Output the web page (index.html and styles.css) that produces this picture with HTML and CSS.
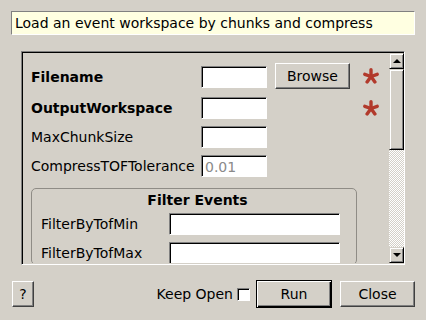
FILE: index.html
```html
<!DOCTYPE html>
<html lang="en">
<head>
  <meta charset="UTF-8" />
  <title>LoadEventAndCompress</title>
  <link rel="stylesheet" href="styles.css">
</head>
<body>
  <div class="dialog">
    <div class="summary">Load an event workspace by chunks and compress</div>

    <div class="scroll-frame">
      <div class="viewport">
        <div class="props">
          <label class="name bold">Filename</label>
          <input class="field" type="text">
          <button class="btn browse">Browse</button>
          <svg class="star" width="16" height="16" viewBox="0 0 16 16"><g stroke="#b23a2c" stroke-width="3.4" stroke-linecap="round"><line x1="8" y1="8.5" x2="8" y2="1.8"/><line x1="8" y1="8.5" x2="14.2" y2="6.3"/><line x1="8" y1="8.5" x2="11.9" y2="13.9"/><line x1="8" y1="8.5" x2="4.1" y2="13.9"/><line x1="8" y1="8.5" x2="1.8" y2="6.3"/></g></svg>

          <label class="name bold">OutputWorkspace</label>
          <input class="field" type="text">
          <span></span>
          <svg class="star" width="16" height="16" viewBox="0 0 16 16"><g stroke="#b23a2c" stroke-width="3.4" stroke-linecap="round"><line x1="8" y1="8.5" x2="8" y2="1.8"/><line x1="8" y1="8.5" x2="14.2" y2="6.3"/><line x1="8" y1="8.5" x2="11.9" y2="13.9"/><line x1="8" y1="8.5" x2="4.1" y2="13.9"/><line x1="8" y1="8.5" x2="1.8" y2="6.3"/></g></svg>

          <label class="name">MaxChunkSize</label>
          <input class="field" type="text">
          <span></span>
          <span></span>

          <label class="name">CompressTOFTolerance</label>
          <input class="field" type="text" placeholder="0.01">
          <span></span>
          <span></span>
        </div>

        <div class="group">
          <div class="group-title">Filter Events</div>
          <div class="group-rows">
            <label class="name">FilterByTofMin</label>
            <input class="field wide" type="text">
            <label class="name">FilterByTofMax</label>
            <input class="field wide" type="text">
          </div>
        </div>
      </div>

      <div class="scrollbar">
        <div class="arrow up"><span class="tri-up"></span></div>
        <div class="handle"></div>
        <div class="track"></div>
        <div class="arrow down"><span class="tri-down"></span></div>
      </div>
    </div>

    <div class="actions">
      <button class="btn help">?</button>
      <div class="spacer"></div>
      <label class="keep">Keep Open <span class="check"></span></label>
      <button class="btn run">Run</button>
      <button class="btn close">Close</button>
    </div>
  </div>
</body>
</html>
```

FILE: styles.css
```css
html, body {
  margin: 0;
  padding: 0;
  background: #d4d0c8;
  font-family: "DejaVu Sans", sans-serif;
  font-size: 14px;
  color: #000;
}
.dialog {
  width: 426px;
  height: 320px;
  box-sizing: border-box;
  padding: 11px 11px 0 11px;
  display: flex;
  flex-direction: column;
}
.summary {
  height: 24px;
  box-sizing: border-box;
  background: #ffffe1;
  border: 1px solid;
  border-color: #808080 #fff #fff #808080;
  padding-left: 3px;
  line-height: 22px;
  white-space: nowrap;
}
.scroll-frame {
  margin: 16px 10px 0 10px;
  height: 214px;
  box-sizing: border-box;
  border: 1px solid;
  border-color: #808080 #fff #fff #808080;
  box-shadow: inset 1px 1px #000;
  padding: 1px 0 1px 1px;
  display: flex;
}
.viewport {
  flex: 1;
  overflow: hidden;
  padding: 10px 0 0 8px;
}
.props {
  display: grid;
  grid-template-columns: 162px 66px 75px 24px;
  grid-template-rows: 27px 22px 22px 22px;
  column-gap: 8px;
  row-gap: 7px;
  align-items: center;
}
.name {
  white-space: nowrap;
}
.bold {
  font-weight: bold;
}
.field {
  height: 22px;
  width: 66px;
  box-sizing: border-box;
  margin: 0;
  background: #fff;
  border: 1px solid;
  border-color: #808080 #fff #fff #808080;
  box-shadow: inset 1px 1px #000;
  font: inherit;
  padding: 2px 3px 0 3px;
}
.field::placeholder {
  color: #8a8a8a;
}
.btn {
  font: inherit;
  color: #000;
  background: #d4d0c8;
  border: 1px solid;
  border-color: #fff #404040 #404040 #fff;
  box-shadow: inset -1px -1px #808080;
  padding: 0;
  margin: 0;
  height: 26px;
  box-sizing: border-box;
}
.browse {
  width: 75px;
  align-self: start;
}
.star {
  margin-left: 5px;
  margin-top: -1px;
}
.group {
  margin-top: 11px;
  width: 326px;
  box-sizing: border-box;
  border: 1px solid #8f8c86;
  border-radius: 5px;
  padding: 3px 16px 0 9px;
}
.group-title {
  font-weight: bold;
  text-align: center;
  line-height: 17px;
  margin: 0 -14px 4px 0;
}
.group-rows {
  display: grid;
  grid-template-columns: 128px 171px;
  row-gap: 7px;
  align-items: center;
}
.wide {
  width: 171px;
}
.scrollbar {
  width: 15px;
  display: flex;
  flex-direction: column;
}
.arrow {
  height: 16px;
  box-sizing: border-box;
  background: #d4d0c8;
  border: 1px solid;
  border-color: #d4d0c8 #000 #000 #d4d0c8;
  box-shadow: inset 1px 1px #fff, inset -1px -1px #808080;
  display: flex;
  align-items: center;
  justify-content: center;
}
.tri-up {
  width: 0;
  height: 0;
  border-left: 4px solid transparent;
  border-right: 4px solid transparent;
  border-bottom: 4px solid #000;
}
.tri-down {
  width: 0;
  height: 0;
  border-left: 4px solid transparent;
  border-right: 4px solid transparent;
  border-top: 4px solid #000;
}
.handle {
  height: 81px;
  box-sizing: border-box;
  background: #d4d0c8;
  border: 1px solid;
  border-color: #d4d0c8 #000 #000 #d4d0c8;
  box-shadow: inset 1px 1px #fff, inset -1px -1px #808080;
}
.track {
  flex: 1;
  background: repeating-conic-gradient(#fff 0 25%, #d4d0c8 0 50%) 0 0 / 2px 2px;
}
.actions {
  margin-top: 15px;
  display: flex;
  align-items: center;
  padding-left: 1px;
}
.help {
  width: 22px;
}
.spacer {
  flex: 1;
}
.keep {
  display: flex;
  align-items: center;
  gap: 4px;
  margin-right: 6px;
}
.check {
  width: 13px;
  height: 13px;
  box-sizing: border-box;
  background: #fff;
  border: 1px solid;
  border-color: #808080 #fff #fff #808080;
  box-shadow: inset 1px 1px #000;
}
.run {
  width: 76px;
  height: 28px;
  border: 1px solid #000;
  box-shadow: inset 1px 1px #fff, inset -1px -1px #000, inset -2px -2px #808080;
}
.close {
  width: 75px;
  margin-left: 8px;
}
```
